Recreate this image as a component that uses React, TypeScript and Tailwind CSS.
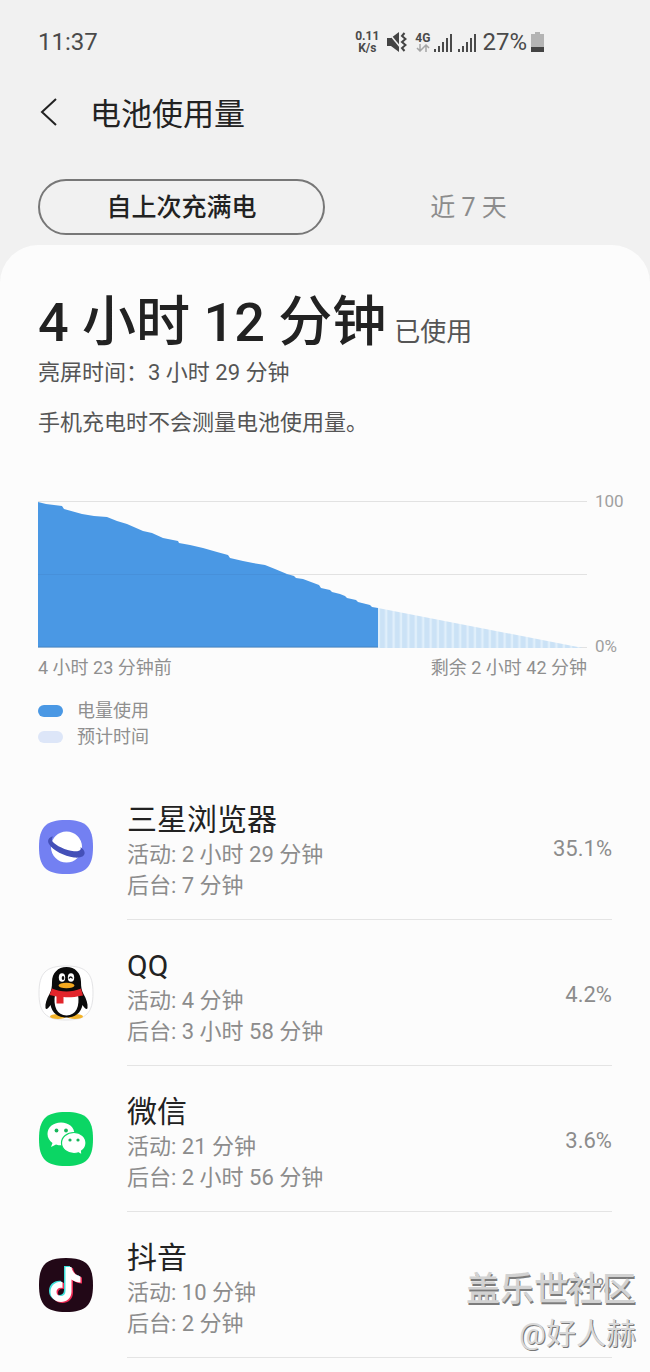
import { ReactNode } from "react";

type AppUsage = {
  name: string;
  active: string;
  background: string;
  percent: string;
  icon: ReactNode;
};

const SQUIRCLE =
  "M28 1C48 1 55 8 55 28C55 48 48 55 28 55C8 55 1 48 1 28C1 8 8 1 28 1Z";

const BrowserIcon = () => (
  <svg viewBox="0 0 56 56" className="size-14 shrink-0" aria-hidden="true">
    <path d={SQUIRCLE} fill="#7380f2" />
    <circle cx="28.500" cy="28" r="15.500" fill="#fff" />
    <path
      d="M15 17.500C10.500 18 9 21.500 11 25C15 31.500 26 37 36 38.500C43 39.200 47.500 37 46.500 33C46 31 44.500 29.500 42.500 28C43.500 31 41.500 32.600 36 32.200C28 31.500 17.500 26.500 14.500 22.500C13.500 20.500 13.800 19 15 17.500Z"
      fill="#4450b8"
    />
  </svg>
);

const QQIcon = () => (
  <svg viewBox="0 0 56 56" className="size-14 shrink-0" aria-hidden="true">
    <path d={SQUIRCLE} fill="#fff" stroke="#e4e4e6" />
    <ellipse cx="20" cy="51.500" rx="8" ry="2.500" fill="#f3b32a" />
    <ellipse cx="37" cy="51.500" rx="8" ry="2.500" fill="#f3b32a" />
    <path
      d="M28.500 2C20 2 14 8 14 17C14 22 13.500 25 11.500 29C8.500 34 7 39 7.500 43C8 45 10 44 12.500 40C14 48 20 52.500 28.500 52.500C37 52.500 43 48 44.500 40C47 44 49 45 49.500 43C50 39 48.500 34 45.500 29C43.500 25 43 22 43 17C43 8 37 2 28.500 2Z"
      fill="#0b0b0b"
    />
    <path
      d="M17 30C15 41 19 50.500 28.500 50.500C38 50.500 42 41 40 30Z"
      fill="#fff"
    />
    <path
      d="M14 23.500C23 27.500 34 27.500 43 23.500L45 30.500C35 32.500 30 32.500 25.500 32V38.500H18.500V31.500L11.500 30Z"
      fill="#e2252b"
    />
    <ellipse cx="28.500" cy="20.500" rx="8" ry="2.800" fill="#f3a81f" />
    <ellipse cx="24" cy="12.500" rx="3.200" ry="4.300" fill="#fff" />
    <ellipse cx="33" cy="12.500" rx="3.200" ry="4.300" fill="#fff" />
    <ellipse cx="25" cy="13" rx="1.300" ry="2" fill="#111" />
    <path
      d="M31 13.500Q32.500 10.500 34.500 13.500"
      fill="none"
      stroke="#111"
      strokeWidth="1.300"
    />
  </svg>
);

const WeChatIcon = () => (
  <svg viewBox="0 0 56 56" className="size-14 shrink-0" aria-hidden="true">
    <path d={SQUIRCLE} fill="#0bd664" />
    <path
      d="M23 11.500C15 11.500 9.500 16.500 9.500 23C9.500 26.700 11.500 29.800 14.500 32L13 36L18 33.500C27 36.500 36.500 31 36.500 23C36.500 16.500 31 11.500 23 11.500Z"
      fill="#fff"
    />
    <path
      d="M36 21.500C29 21.500 23.500 26 23.500 32C23.500 38 29 42.500 36 42.500C37.500 42.500 39 42.300 40.500 41.800L44 44L43.500 40C46.500 38 48 35.300 48 32C48 26 43 21.500 36 21.500Z"
      fill="#fff"
      stroke="#0bd664"
      strokeWidth="1.200"
    />
    <circle cx="18.500" cy="19.500" r="1.900" fill="#16b65b" />
    <circle cx="28" cy="19.500" r="1.900" fill="#16b65b" />
    <circle cx="32" cy="29" r="1.600" fill="#16b65b" />
    <circle cx="40" cy="29" r="1.600" fill="#16b65b" />
  </svg>
);

const NOTE =
  "M27 10H33C33.500 14.500 37 18.500 42 19.500V25.500C38.800 25.400 35.700 24.300 33 22.500V34.500C33 41 28 45 22.500 45C16.500 45 12 40.500 12 35C12 28.500 17.500 24 24 25V31C20.500 30 18 32 18 35C18 37.500 20 39 22.300 39C25 39 27 37.200 27 34Z";

const DouyinIcon = () => (
  <svg viewBox="0 0 56 56" className="size-14 shrink-0" aria-hidden="true">
    <path d={SQUIRCLE} fill="#220817" />
    <path d={NOTE} fill="#3fe0da" transform="translate(-1 -1)" />
    <path d={NOTE} fill="#ee2b55" transform="translate(2 1)" />
    <path d={NOTE} fill="#fff" transform="translate(.5 0)" />
  </svg>
);

const apps: AppUsage[] = [
  {
    name: "三星浏览器",
    active: "2 小时 29 分钟",
    background: "7 分钟",
    percent: "35.1%",
    icon: <BrowserIcon />,
  },
  {
    name: "QQ",
    active: "4 分钟",
    background: "3 小时 58 分钟",
    percent: "4.2%",
    icon: <QQIcon />,
  },
  {
    name: "微信",
    active: "21 分钟",
    background: "2 小时 56 分钟",
    percent: "3.6%",
    icon: <WeChatIcon />,
  },
  {
    name: "抖音",
    active: "10 分钟",
    background: "2 分钟",
    percent: "2.9%",
    icon: <DouyinIcon />,
  },
];

const SignalIcon = () => (
  <svg viewBox="0 0 18 18" className="size-[18px]" aria-hidden="true">
    <path
      d="M0 15h2v3H0zM4 12h2v6H4zM8 8h2v10H8zM12 4h2v14h-2zM16 0h2v18h-2z"
      fill="#4a4a4a"
    />
  </svg>
);

const StatusBar = () => (
  <div className="flex h-[84px] items-center justify-between pr-[106px] pl-[38px] text-2xl text-[#4a4a4a]">
    <span>11:37</span>
    <div className="flex items-center">
      <div className="mr-2 text-center text-xs leading-3 font-bold">
        <div>0.11</div>
        <div>K/s</div>
      </div>
      <svg viewBox="0 0 20 20" className="mr-2 size-5" aria-hidden="true">
        <path d="M0 6h4l8-6v20l-8-6H0z" fill="#444" />
        <path d="M0 -1L14 16" stroke="#f1f1f1" strokeWidth="1.500" />
        <path
          d="M17.500 1l-2.500 3 3.500 3-3.500 3 3.500 3-3.500 3 2.500 3"
          fill="none"
          stroke="#444"
          strokeWidth="2"
        />
      </svg>
      <div className="mr-1 flex flex-col items-center">
        <span className="text-xs leading-3 font-bold">4G</span>
        <svg viewBox="0 0 14 8" className="h-2 w-3.5" aria-hidden="true">
          <path
            d="M4 0v7M1 4l3 3 3-3M10 8V1M7 4l3-3 3 3"
            fill="none"
            stroke="#a5a5a5"
            strokeWidth="1.500"
          />
        </svg>
      </div>
      <div className="mr-1.5 flex gap-1.5 pt-0.5">
        <SignalIcon />
        <SignalIcon />
      </div>
      <span>27%</span>
      <svg viewBox="0 0 13 20" className="ml-1 h-5 w-[13px]" aria-hidden="true">
        <path d="M4 0h5v2h4v18H0V2h4z" fill="#b4b4b4" />
        <path d="M0 15h13v5H0z" fill="#444" />
      </svg>
    </div>
  </div>
);

const CURVE =
  "M0 1L8 3L24 5L26 8L44 13L56 15L69 16L79 20L89 23L105 30L114 32L125 37L140 40L141 42L152 44L165 47L179 51L190 54L192 57L205 60L215 62L227 64L237 68L249 73L256 75L258 77L265 78L281 84L283 87L292 89L294 91L302 93L307 95L309 97L318 99L320 101L332 104L334 106L340 107V146H0Z";

const UsageChart = () => (
  <div className="mt-[63px] grid grid-cols-[1fr_auto] gap-x-2 text-lg text-[#8f8f8f]">
    <svg
      viewBox="0 0 549 147"
      preserveAspectRatio="none"
      className="h-[147px] w-full"
      role="img"
      aria-label="电池使用量"
    >
      <defs>
        <pattern
          id="stripes"
          x="340"
          width="7.400"
          height="147"
          patternUnits="userSpaceOnUse"
        >
          <rect width="7.400" height="147" fill="#e0effb" />
          <rect x="2" width="5" height="147" fill="#cbe2f6" />
        </pattern>
      </defs>
      <path d="M0 .5H549M0 73.500H549M0 146.500H549" stroke="#e2e2e2" />
      <path d="M340 107L545 147H340Z" fill="url(#stripes)" />
      <path d={CURVE} fill="#4a98e4" />
      <path d="M0 73.500H248" stroke="#4790da" />
      <path d="M0 146H340" stroke="#4386c8" />
    </svg>
    <div className="-mt-2.5 -mb-2 flex w-[29px] flex-col justify-between text-[17px] leading-5 text-[#a0a0a0]">
      <span>100</span>
      <span>0%</span>
    </div>
    <div className="mt-1.5 flex justify-between leading-7">
      <span>4 小时 23 分钟前</span>
      <span>剩余 2 小时 42 分钟</span>
    </div>
  </div>
);

const AppRow = ({ app }: { app: AppUsage }) => (
  <li className="flex items-center gap-[33px]">
    {app.icon}
    <div className="flex flex-1 items-center justify-between border-b border-[#e4e4e4] pt-[27px] pb-[18px]">
      <div className="text-[22px] leading-[31px] text-[#8c8c8c]">
        <h2 className="text-[30px] leading-[38px] text-[#222]">{app.name}</h2>
        <p>活动: {app.active}</p>
        <p>后台: {app.background}</p>
      </div>
      <span className="pb-1.5 text-[22px] text-[#8c8c8c]">{app.percent}</span>
    </div>
  </li>
);

const App = () => {
  return (
    <div className="relative min-h-screen bg-[#f1f1f1] font-['Roboto','Noto_Sans_CJK_SC',sans-serif]">
      <StatusBar />
      <header className="flex h-[58px] items-center gap-8 px-[38px]">
        <button aria-label="返回" className="w-5">
          <svg viewBox="0 0 20 30" className="h-[30px] w-5" aria-hidden="true">
            <path
              d="M18 1L4 14L18 27"
              fill="none"
              stroke="#222"
              strokeWidth="2"
            />
          </svg>
        </button>
        <h1 className="pt-1 text-[31px] leading-10 text-[#222]">电池使用量</h1>
      </header>
      <nav className="mt-[37px] grid grid-cols-2 px-[38px]">
        <button className="h-14 rounded-full border-2 border-[#777] pt-0.5 text-[25px] font-medium text-[#222]">
          自上次充满电
        </button>
        <button className="h-14 pt-0.5 text-[25px] text-[#8c8c8c]">近 7 天</button>
      </nav>

      <main className="mt-2.5 rounded-t-[38px] bg-[#fcfcfc] pt-[45px] pb-3.5">
        <section className="pr-[26px] pl-[38px] text-[22px] leading-[30px] text-[#555]">
          <p className="flex h-16 items-baseline gap-2 leading-[66px]">
            <strong className="text-[54px] font-medium text-[#222]">
              4 小时 12 分钟
            </strong>
            <span className="text-[26px]">已使用</span>
          </p>
          <p className="mt-1">亮屏时间：3 小时 29 分钟</p>
          <p className="mt-5">手机充电时不会测量电池使用量。</p>
          <UsageChart />
          <ul className="mt-4 text-lg leading-[26px] text-[#8f8f8f]">
            <li className="flex items-center gap-3.5">
              <span className="h-3 w-[25px] rounded-full bg-[#4a98e4]" />
              电量使用
            </li>
            <li className="flex items-center gap-3.5">
              <span className="h-3 w-[25px] rounded-full bg-[#dde6f8]" />
              预计时间
            </li>
          </ul>
        </section>
        <ul className="mt-6 px-[38px]">
          {apps.map((app) => (
            <AppRow key={app.name} app={app} />
          ))}
        </ul>
      </main>

      <div className="pointer-events-none absolute right-3.5 bottom-4 text-right">
        <p className="text-[34px] leading-[46px] font-medium text-[#d2d2d2] [text-shadow:1px_2px_0_#7c7c7c]">
          盖乐世社区
        </p>
        <p className="text-[30px] leading-[44px] text-[#d8d8d8] [text-shadow:1px_1px_0_#777]">
          @好人赫
        </p>
      </div>
    </div>
  );
};

export default App;
